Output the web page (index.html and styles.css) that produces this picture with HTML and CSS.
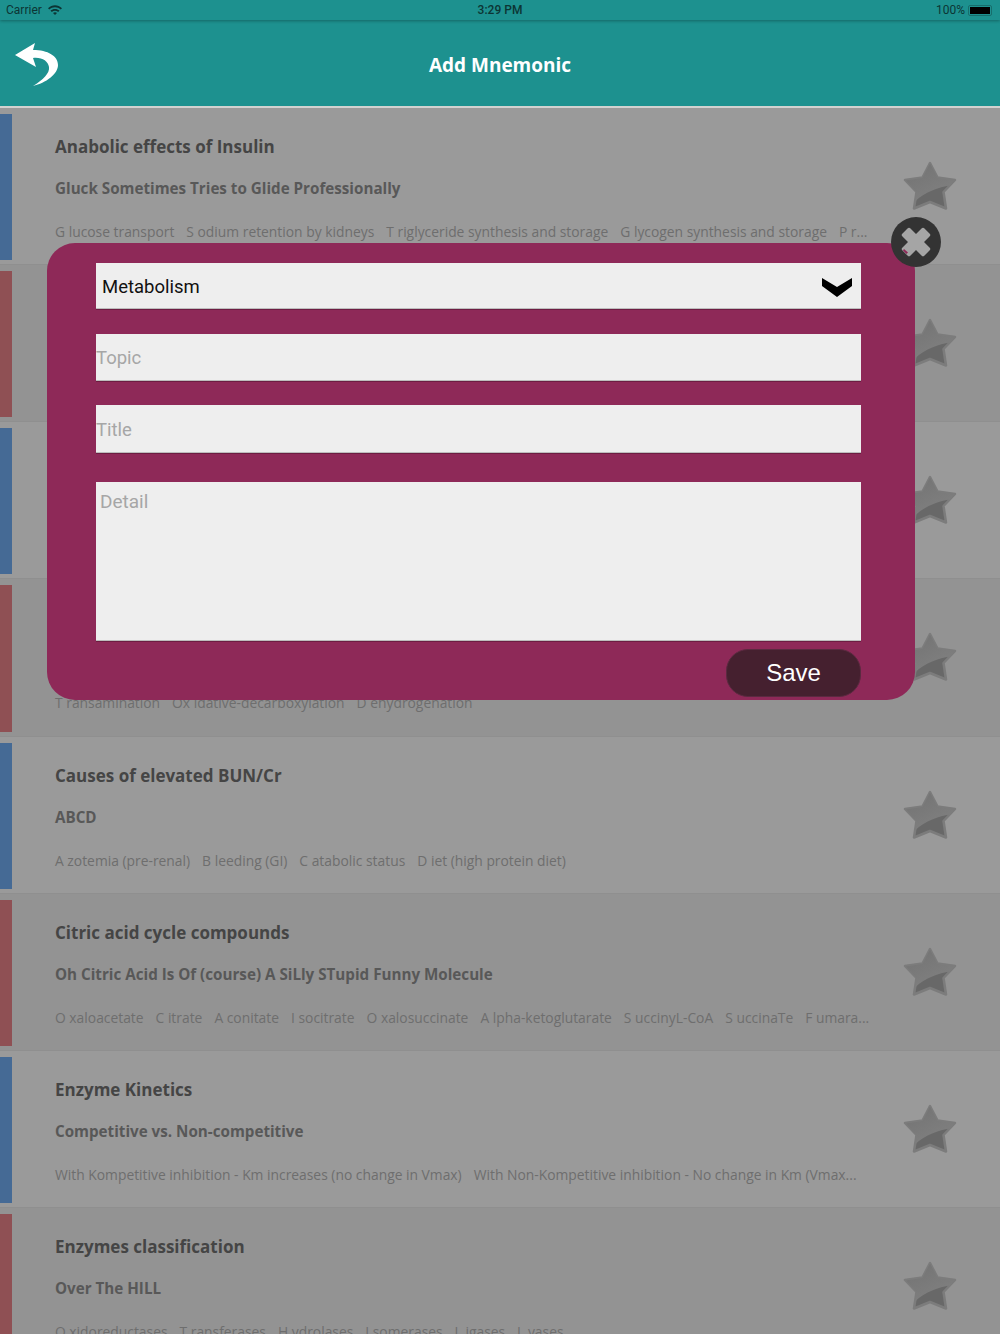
FILE: index.html
```html
<!DOCTYPE html>
<html lang="en">
<head>
    <meta charset="UTF-8">
    <meta name="viewport" content="width=device-width, initial-scale=1.0">
    <title>Add Mnemonic</title>
    <link rel="stylesheet" href="styles.css">
</head>
<body>
    <svg class="defs" width="0" height="0">
        <defs>
            <linearGradient id="starTop" x1="0" y1="0" x2="0.6" y2="1">
                <stop offset="0" stop-color="#727272"/>
                <stop offset="1" stop-color="#808080"/>
            </linearGradient>
            <symbol id="star" viewBox="0 0 54 50">
                <path d="M27 2 L34.500 16.500 L52 19 L40.500 31 L43 47.500 L27 41 L11 47.500 L13.500 31 L2 19 L19.500 16.500 Z" fill="#686868" stroke="#7c7c7c" stroke-width="2.500" stroke-linejoin="round"/>
                <path d="M27 2.500 L34.500 17 L51 19.500 L47 24.500 C36 26 22 31 12.500 40 L13.500 31 L3 19.500 L19.500 17 Z" fill="url(#starTop)"/>
            </symbol>
        </defs>
    </svg>

    <div class="statusbar">
        <div class="status-left">
            <span>Carrier</span>
            <svg class="wifi" viewBox="0 0 14 10" width="14" height="10">
                <path d="M0 3.200 C4 -0.800 10 -0.800 14 3.200 L12.700 4.600 C9.500 1.500 4.500 1.500 1.300 4.600 Z" fill="#0c3534"/>
                <path d="M2.500 5.600 C5 3.300 9 3.300 11.500 5.600 L10.200 7 C8.300 5.400 5.700 5.400 3.800 7 Z" fill="#0c3534"/>
                <path d="M5 8 C6.200 7 7.800 7 9 8 L7 10 Z" fill="#0c3534"/>
            </svg>
        </div>
        <span class="status-time">3:29 PM</span>
        <div class="status-right">
            <span>100%</span>
            <span class="battery"><span class="battery-level"></span></span>
        </div>
    </div>

    <header class="topbar">
        <svg class="back-icon" viewBox="0 0 60 60" width="60" height="60">
            <path d="M15 25 L35 13 L33 20 C48 20 58 26 58 35 C58 44 46 53 33 56 C43 50 50 43 49 37 C48 31 42 27 33 28 L36 37 Z" fill="#fff"/>
        </svg>
        <h1>Add Mnemonic</h1>
    </header>

    <div class="list">
        <div class="row row-blue">
            <div class="row-text">
                <h2>Anabolic effects of Insulin</h2>
                <h3>Gluck Sometimes Tries to Glide Professionally</h3>
                <p><span>G lucose transport</span><span>S odium retention by kidneys</span><span>T riglyceride synthesis and storage</span><span>G lycogen synthesis and storage</span><span>P r...</span></p>
            </div>
            <svg class="star"><use href="#star"/></svg>
        </div>
        <div class="row row-red">
            <div class="row-text"><h2></h2><h3></h3><p></p></div>
            <svg class="star"><use href="#star"/></svg>
        </div>
        <div class="row row-blue">
            <div class="row-text"><h2></h2><h3></h3><p></p></div>
            <svg class="star"><use href="#star"/></svg>
        </div>
        <div class="row row-red">
            <div class="row-text">
                <h2></h2><h3></h3>
                <p><span>T ransamination</span><span>Ox idative-decarboxylation</span><span>D ehydrogenation</span></p>
            </div>
            <svg class="star"><use href="#star"/></svg>
        </div>
        <div class="row row-blue">
            <div class="row-text">
                <h2>Causes of elevated BUN/Cr</h2>
                <h3>ABCD</h3>
                <p><span>A zotemia (pre-renal)</span><span>B leeding (GI)</span><span>C atabolic status</span><span>D iet (high protein diet)</span></p>
            </div>
            <svg class="star"><use href="#star"/></svg>
        </div>
        <div class="row row-red">
            <div class="row-text">
                <h2>Citric acid cycle compounds</h2>
                <h3>Oh Citric Acid Is Of (course) A SiLly STupid Funny Molecule</h3>
                <p><span>O xaloacetate</span><span>C itrate</span><span>A conitate</span><span>I socitrate</span><span>O xalosuccinate</span><span>A lpha-ketoglutarate</span><span>S uccinyL-CoA</span><span>S uccinaTe</span><span>F umara...</span></p>
            </div>
            <svg class="star"><use href="#star"/></svg>
        </div>
        <div class="row row-blue">
            <div class="row-text">
                <h2>Enzyme Kinetics</h2>
                <h3>Competitive vs. Non-competitive</h3>
                <p><span>With Kompetitive inhibition - Km increases (no change in Vmax)</span><span>With Non-Kompetitive inhibition - No change in Km (Vmax...</span></p>
            </div>
            <svg class="star"><use href="#star"/></svg>
        </div>
        <div class="row row-red">
            <div class="row-text">
                <h2>Enzymes classification</h2>
                <h3>Over The HILL</h3>
                <p><span>O xidoreductases</span><span>T ransferases</span><span>H ydrolases</span><span>I somerases</span><span>L igases</span><span>L yases</span></p>
            </div>
            <svg class="star"><use href="#star"/></svg>
        </div>
    </div>

    <div class="modal">
        <button class="close-btn" aria-label="Close">
            <svg viewBox="0 0 50 50" width="50" height="50">
                <path d="M17 25 L11.500 19.500 A2 2 0 0 1 11.500 16.500 L16.500 11.500 A2 2 0 0 1 19.500 11.500 L25 17 L30.500 11.500 A2 2 0 0 1 33.500 11.500 L38.500 16.500 A2 2 0 0 1 38.500 19.500 L33 25 L38.500 30.500 A2 2 0 0 1 38.500 33.500 L33.500 38.500 A2 2 0 0 1 30.500 38.500 L25 33 L19.500 38.500 A2 2 0 0 1 16.500 38.500 L11.500 33.500 A2 2 0 0 1 11.500 30.500 Z" fill="#a5a5a5"/>
                <path d="M13 32 L17 35.500 L15.500 37 L12 33.500 Z" fill="#8e2958"/>
            </svg>
        </button>
        <div class="select-field">
            <span>Metabolism</span>
            <svg viewBox="0 0 30 20" width="30" height="20">
                <path d="M0 1 L15 10 L30 1 L30 9 L15 20 L0 9 Z" fill="#000"/>
            </svg>
        </div>
        <input class="text-field" type="text" placeholder="Topic">
        <input class="text-field" type="text" placeholder="Title">
        <textarea class="detail-field" placeholder="Detail"></textarea>
        <button class="save-btn">Save</button>
    </div>
</body>
</html>
```

FILE: styles.css
```css
* {
    box-sizing: border-box;
    margin: 0;
    padding: 0;
}

html, body {
    height: 1334px;
    overflow: hidden;
}

body {
    position: relative;
    font-family: 'Open Sans', sans-serif;
    background: #999;
}

.defs {
    position: absolute;
}

.statusbar {
    height: 20px;
    background: #1d918f;
    color: #0c3534;
    font-family: 'Roboto', sans-serif;
    font-size: 12px;
    padding: 0 6px;
    display: flex;
    align-items: center;
    justify-content: space-between;
    box-shadow: 0 1px 3px rgba(0, 0, 0, 0.3);
    position: relative;
    z-index: 1;
}

.status-left,
.status-right {
    width: 200px;
    display: flex;
    align-items: center;
    gap: 6px;
}

.status-right {
    justify-content: flex-end;
    gap: 3px;
}

.status-time {
    font-weight: 500;
}

.battery {
    width: 24px;
    height: 11px;
    border: 1px solid #176e6c;
    border-radius: 2px;
    padding: 1px;
    margin-right: 2px;
}

.battery-level {
    display: block;
    height: 100%;
    background: #000;
}

.topbar {
    height: 88px;
    padding-top: 4px;
    background: #1d918f;
    border-bottom: 2px solid #d2d2d0;
    display: flex;
    align-items: center;
    justify-content: center;
    position: relative;
}

.topbar h1 {
    color: #fff;
    font-size: 19px;
    font-weight: 700;
}

.back-icon {
    position: absolute;
    left: 0;
    top: 10px;
}

.row {
    height: 157.15px;
    padding: 6px 0 4px;
    display: flex;
    align-items: stretch;
    border-bottom: 1px solid #8f8f8f;
    position: relative;
}

.row:nth-child(odd) {
    background: #9a9a9a;
}

.row:nth-child(even) {
    background: #939393;
}

.row::before {
    content: "";
    width: 12px;
    flex-shrink: 0;
}

.row-blue::before {
    background: #456a95;
}

.row-red::before {
    background: #8f5054;
}

.row-text {
    padding: 20px 0 0 43px;
    flex: 1;
    min-width: 0;
}

.row-text h2 {
    height: 26px;
    line-height: 26px;
    font-size: 17px;
    font-weight: 700;
    color: #454545;
}

.row-text h3 {
    height: 20px;
    line-height: 20px;
    margin-top: 18px;
    font-size: 15.200px;
    font-weight: 700;
    color: #585858;
}

.row-text p {
    height: 20px;
    line-height: 20px;
    margin-top: 24px;
    font-size: 13.850px;
    color: #6e6e6e;
    white-space: nowrap;
    display: flex;
    gap: 12px;
}

.star {
    position: absolute;
    left: 903px;
    top: 53px;
    width: 54px;
    height: 50px;
}

.modal {
    position: absolute;
    left: 47px;
    top: 243px;
    width: 868px;
    height: 457px;
    background: #8e2958;
    border-radius: 28px;
    padding: 20px 54px 0 49px;
    display: flex;
    flex-direction: column;
    align-items: stretch;
}

.close-btn {
    position: absolute;
    right: -26px;
    top: -26px;
    width: 50px;
    height: 50px;
    border: none;
    border-radius: 50%;
    background: #333;
}

.close-btn svg {
    display: block;
}

.select-field,
.text-field,
.detail-field {
    background: #eee;
    border: none;
    border-bottom: 1px solid #bdbdbd;
    box-shadow: 0 1px 0 #6d1d42;
    border-radius: 0;
    font-family: 'Roboto', sans-serif;
    font-size: 18.500px;
}

.select-field {
    height: 46px;
    padding: 2px 9px 0 6px;
    display: flex;
    align-items: center;
    justify-content: space-between;
    color: #111;
}

.text-field {
    height: 47px;
    padding-top: 2px;
    margin-top: 25px;
}

.text-field + .text-field {
    margin-top: 24px;
    height: 48px;
}

.detail-field {
    height: 159px;
    margin-top: 29px;
    padding: 8px 4px;
    font-size: 19px;
    resize: none;
}

.text-field::placeholder,
.detail-field::placeholder {
    color: #a6a6a6;
    opacity: 1;
}

.save-btn {
    width: 135px;
    height: 48px;
    margin-top: 8px;
    align-self: flex-end;
    background: #45202f;
    color: #fff;
    border: 1px solid #5a2a40;
    border-radius: 22px;
    font-family: 'Liberation Sans', sans-serif;
    font-size: 24px;
}
```
